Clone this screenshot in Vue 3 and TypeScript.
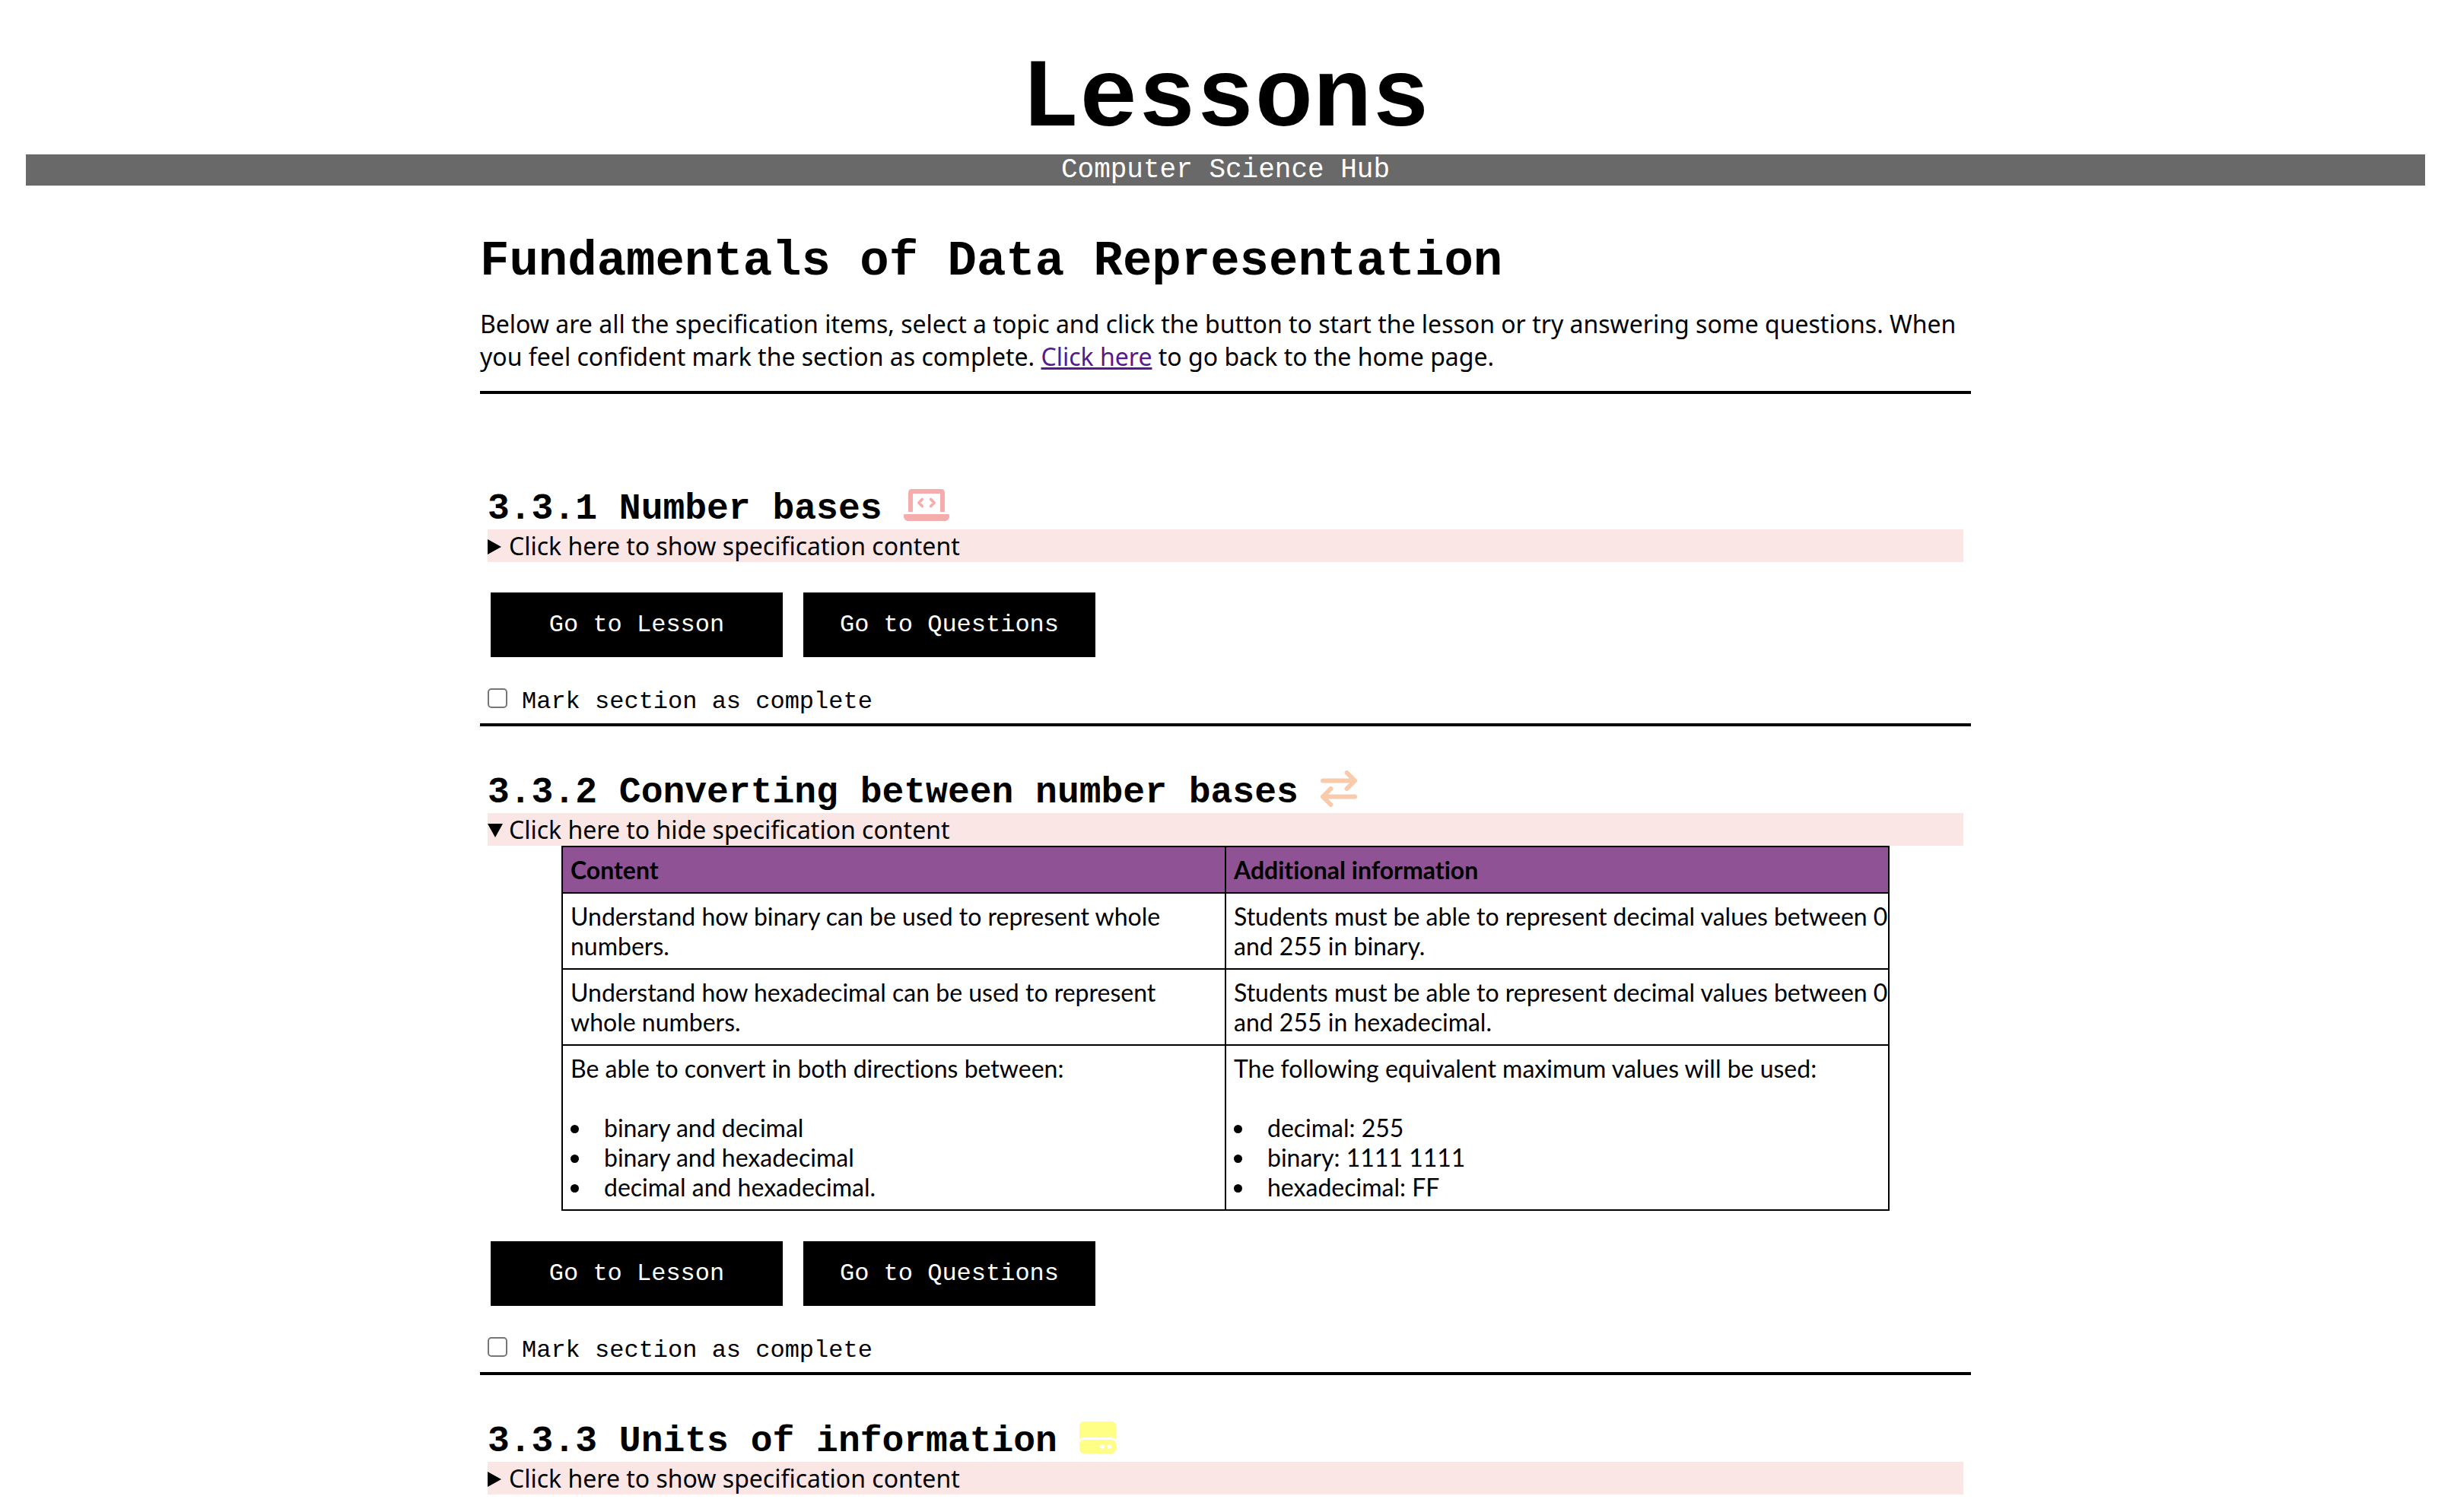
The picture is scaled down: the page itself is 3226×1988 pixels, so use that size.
<script setup lang="ts">
import { reactive } from 'vue'

interface Cell {
  text: string
  items?: string[]
}

interface Section {
  id: string
  title: string
  icon: 'laptop' | 'arrows' | 'drive'
  open: boolean
  complete: boolean
  actions: boolean
  rows: Cell[][]
}

const sections = reactive<Section[]>([
  { id: '3.3.1', title: 'Number bases', icon: 'laptop', open: false, complete: false, actions: true, rows: [] },
  {
    id: '3.3.2',
    title: 'Converting between number bases',
    icon: 'arrows',
    open: true,
    complete: false,
    actions: true,
    rows: [
      [
        { text: 'Understand how binary can be used to represent whole numbers.' },
        { text: 'Students must be able to represent decimal values between 0 and 255 in binary.' },
      ],
      [
        { text: 'Understand how hexadecimal can be used to represent whole numbers.' },
        { text: 'Students must be able to represent decimal values between 0 and 255 in hexadecimal.' },
      ],
      [
        {
          text: 'Be able to convert in both directions between:',
          items: ['binary and decimal', 'binary and hexadecimal', 'decimal and hexadecimal.'],
        },
        {
          text: 'The following equivalent maximum values will be used:',
          items: ['decimal: 255', 'binary: 1111 1111', 'hexadecimal: FF'],
        },
      ],
    ],
  },
  { id: '3.3.3', title: 'Units of information', icon: 'drive', open: false, complete: false, actions: false, rows: [] },
])

function onToggle(section: Section, event: Event) {
  section.open = (event.target as HTMLDetailsElement).open
}
</script>

<template>
  <div class="page">
    <header>
      <h1>Lessons</h1>
      <p class="subtitle">Computer Science Hub</p>
    </header>
    <main>
      <div class="intro">
        <h2>Fundamentals of Data Representation</h2>
        <p>
          Below are all the specification items, select a topic and click the button to start the
          lesson or try answering some questions. When you feel confident mark the section as
          complete. <a href="#home">Click here</a> to go back to the home page.
        </p>
      </div>
      <section v-for="section in sections" :key="section.id">
        <h3>
          {{ section.id }} {{ section.title }}&nbsp;<svg
            v-if="section.icon === 'laptop'"
            class="icon laptop"
            viewBox="0 0 640 512"
            aria-hidden="true"
          >
            <path
              fill="currentColor"
              d="M128 96h384v256h64V80c0-26.4-21.6-48-48-48H112c-26.4 0-48 21.6-48 48v272h64V96zM624 384H16c-8.8 0-16 7.3-16 16v16c0 35.3 28.8 64 64 64h512c35.3 0 64-28.7 64-64v-16c0-8.7-7.2-16-16-16z"
            />
            <path
              fill="none"
              stroke="currentColor"
              stroke-width="40"
              stroke-linecap="round"
              stroke-linejoin="round"
              d="M260 176l-48 48 48 48M380 176l48 48-48 48"
            />
          </svg>
          <svg v-else-if="section.icon === 'arrows'" class="icon arrows" viewBox="0 0 512 512" aria-hidden="true">
            <path
              fill="none"
              stroke="currentColor"
              stroke-width="64"
              stroke-linecap="round"
              stroke-linejoin="round"
              d="M32 144h448M368 32l112 112-112 112M480 368H32M144 256L32 368l112 112"
            />
          </svg>
          <svg v-else class="icon drive" viewBox="0 0 512 512" aria-hidden="true">
            <path
              fill="currentColor"
              d="M0 96c0-35.3 28.7-64 64-64h384c35.3 0 64 28.7 64 64v184.4c-17-15.2-39.4-24.4-64-24.4H64c-24.6 0-47 9.2-64 24.4V96zM64 288h384c35.3 0 64 28.7 64 64v64c0 35.3-28.7 64-64 64H64c-35.3 0-64-28.7-64-64v-64c0-35.3 28.7-64 64-64zM320 416a32 32 0 1 0 0-64 32 32 0 1 0 0 64zm128-32a32 32 0 1 0-64 0 32 32 0 1 0 64 0z"
            />
          </svg>
        </h3>
        <details :open="section.open" @toggle="onToggle(section, $event)">
          <summary>Click here to {{ section.open ? 'hide' : 'show' }} specification content</summary>
          <table v-if="section.rows.length">
            <thead>
              <tr>
                <th scope="col">Content</th>
                <th scope="col">Additional information</th>
              </tr>
            </thead>
            <tbody>
              <tr v-for="(row, r) in section.rows" :key="r">
                <td v-for="(cell, c) in row" :key="c">
                  {{ cell.text }}
                  <ul v-if="cell.items">
                    <li v-for="item in cell.items" :key="item">{{ item }}</li>
                  </ul>
                </td>
              </tr>
            </tbody>
          </table>
        </details>
        <template v-if="section.actions">
          <div class="buttons">
            <button type="button">Go to Lesson</button>
            <button type="button">Go to Questions</button>
          </div>
          <div class="complete">
            <input :id="`done-${section.id}`" v-model="section.complete" type="checkbox" />
            <label :for="`done-${section.id}`">Mark section as complete</label>
          </div>
        </template>
      </section>
    </main>
  </div>
</template>

<style>
body {
  margin: 0;
  background: #fff;
}
</style>

<style scoped>
.page {
  padding: 58px 38px 0 34px;
  color: #000;
  font: 32px/43px 'Noto Sans', sans-serif;
}

h1,
h2,
h3,
p {
  margin: 0;
}

h1,
h2,
h3,
.subtitle,
button,
label {
  font-family: 'Courier New', 'Liberation Mono', monospace;
}

h1 {
  font-size: 128px;
  line-height: 145px;
  text-align: center;
}

.subtitle {
  background: #696969;
  color: #fff;
  font-size: 36px;
  line-height: 41px;
  text-align: center;
}

main {
  max-width: 1960px;
  margin: 64px auto 0;
}

.intro {
  padding-bottom: 24px;
  border-bottom: 4px solid #000;
  margin-bottom: 64px;
}

h2 {
  margin-bottom: 24px;
  font-size: 64px;
  line-height: 72px;
}

a {
  color: #551a8b;
}

section {
  padding: 58px 10px 10px;
  border-bottom: 4px solid #000;
}

section:last-child {
  border-bottom: 0;
}

h3 {
  height: 56px;
  font-size: 48px;
  line-height: 54px;
}

.icon {
  width: 48px;
  height: 48px;
  vertical-align: -6px;
}

.laptop {
  width: 60px;
  color: #f4acac;
}

.arrows {
  color: #f8cbad;
  overflow: visible;
}

.drive {
  color: #ffff85;
}

summary {
  display: flex;
  background: #fae6e5;
}

summary::before {
  content: '';
  width: 18px;
  height: 20px;
  margin: 13px 10px 0 0;
  background: #000;
  clip-path: polygon(0 0, 100% 50%, 0 100%);
}

details[open] > summary::before {
  width: 20px;
  height: 18px;
  margin: 14px 8px 0 0;
  clip-path: polygon(0 0, 100% 0, 50% 100%);
}

table {
  width: 90%;
  margin: 0 auto;
  border-collapse: collapse;
  table-layout: fixed;
  font: 32px/39px Lato, sans-serif;
  font-variant-ligatures: none;
}

th,
td {
  padding: 10px 0 10px 10px;
  border: 2px solid #000;
  text-align: left;
  vertical-align: top;
}

th {
  background: #8f5294;
  font-weight: 700;
}

ul {
  margin: 39px 0 0;
  padding: 0;
  list-style-position: inside;
}

.buttons {
  display: flex;
  gap: 27px;
  margin: 40px 4px 41px;
}

button {
  width: 384px;
  height: 85px;
  padding: 0;
  border: 0;
  background: #000;
  color: #fff;
  font-size: 32px;
}

.complete {
  display: flex;
  gap: 19px;
}

input {
  appearance: none;
  width: 26px;
  height: 26px;
  margin: 0;
  border: 2px solid #767676;
  border-radius: 5px;
  background: #fff;
}

input:checked {
  background: #0075ff;
}

label {
  line-height: 36px;
}
</style>
